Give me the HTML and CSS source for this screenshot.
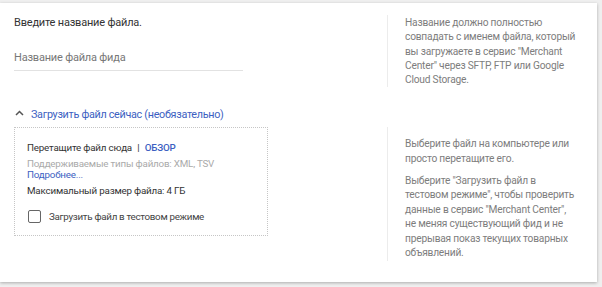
FILE: index.html
```html
<!DOCTYPE html>
<html lang="ru">
<head>
<meta charset="utf-8">
<link rel="stylesheet" href="styles.css">
</head>
<body>
<div class="card">
  <div class="row row-name">
    <div class="main">
      <div class="title">Введите название файла.</div>
      <div class="input">Название файла фида</div>
    </div>
    <div class="help help-name">
      Название должно полностью<br>совпадать с именем файла, который<br>вы загружаете в сервис "Merchant<br>Center" через SFTP, FTP или Google<br>Cloud Storage.
    </div>
  </div>
  <div class="toggle">
    <svg class="chev" width="9" height="6" viewBox="0 0 9 6"><polyline points="1,5 4.5,1.5 8,5" fill="none" stroke="#555" stroke-width="1.5"/></svg>
    <span>Загрузить файл сейчас (необязательно)</span>
  </div>
  <div class="row row-upload">
    <div class="main">
      <div class="dropbox">
        <div class="drop-line">Перетащите файл сюда <span class="sep">|</span> <span class="browse">ОБЗОР</span></div>
        <div class="types">
          <div class="types-text">Поддерживаемые типы файлов: XML, TSV</div>
          <div class="more">Подробнее...</div>
        </div>
        <div class="max">Максимальный размер файла: 4 ГБ</div>
        <label class="check"><span class="box"></span><span>Загрузить файл в тестовом режиме</span></label>
      </div>
    </div>
    <div class="help help-upload">
      <p>Выберите файл на компьютере или<br>просто перетащите его.</p>
      <p>Выберите "Загрузить файл в<br>тестовом режиме", чтобы проверить<br>данные в сервис "Merchant Center",<br>не меняя существующий фид и не<br>прерывая показ текущих товарных<br>объявлений.</p>
    </div>
  </div>
</div>
</body>
</html>
```

FILE: styles.css
```css
html, body {
  margin: 0;
  padding: 0;
}
body {
  background: #efefef;
  width: 602px;
  height: 287px;
  overflow: hidden;
  font-family: Roboto, "Noto Sans", Arial, sans-serif;
  color: #3c3c3c;
}
.card {
  margin-top: 3px;
  width: 597px;
  height: 279px;
  box-sizing: border-box;
  background: #fff;
  box-shadow: 0 1px 3px rgba(0,0,0,0.28);
  padding-top: 12px;
}
.row {
  display: flex;
}
.main {
  width: 373px;
  padding-left: 14px;
  flex: none;
}
.help {
  border-left: 1px solid #ececec;
  padding-left: 17px;
  width: 178px;
  font-size: 10.2px;
  letter-spacing: -0.2px;
  line-height: 14.3px;
  color: #7d7d7d;
  white-space: nowrap;
}
.help-name {
  padding-top: 1px;
}
.help p {
  margin: 0;
}
.help p + p {
  margin-top: 7.5px;
}
.title {
  font-size: 11px;
  letter-spacing: -0.2px;
  line-height: 14px;
  margin-top: 1px;
  color: #333;
}
.input {
  margin-top: 21px;
  width: 229px;
  font-size: 11px;
  letter-spacing: -0.2px;
  line-height: 14px;
  color: #777;
  padding-bottom: 5px;
  border-bottom: 1px solid #e2e2e2;
}
.toggle {
  display: flex;
  align-items: center;
  padding-left: 15px;
  margin-top: 19px;
  height: 16px;
  font-size: 10.8px;
  letter-spacing: -0.3px;
  color: #3d5fc2;
}
.chev {
  margin-right: 7px;
  margin-top: -3px;
}
.row-upload {
  margin-top: 5px;
}
.help-upload {
  padding-top: 10px;
  line-height: 14.5px;
}
.dropbox {
  width: 254px;
  height: 109px;
  box-sizing: border-box;
  border: 1px dotted #c6c6c6;
  padding: 13px 0 0 12px;
  font-size: 9.8px;
  letter-spacing: -0.2px;
}
.drop-line {
  line-height: 14px;
  color: #333;
}
.sep {
  margin: 0 3px;
}
.browse {
  color: #3d5fc2;
  font-weight: 500;
}
.types {
  margin-top: 3px;
  line-height: 11px;
}
.types-text {
  color: #aaa;
}
.more {
  color: #3d5fc2;
}
.max {
  margin-top: 4px;
  line-height: 14px;
  color: #333;
}
.check {
  display: flex;
  align-items: center;
  margin-top: 12px;
  padding-left: 1px;
  color: #444;
  font-size: 9.8px;
  letter-spacing: -0.3px;
}
.box {
  width: 11px;
  height: 11px;
  border: 1.5px solid #666;
  border-radius: 2px;
  margin-right: 8px;
}
```
